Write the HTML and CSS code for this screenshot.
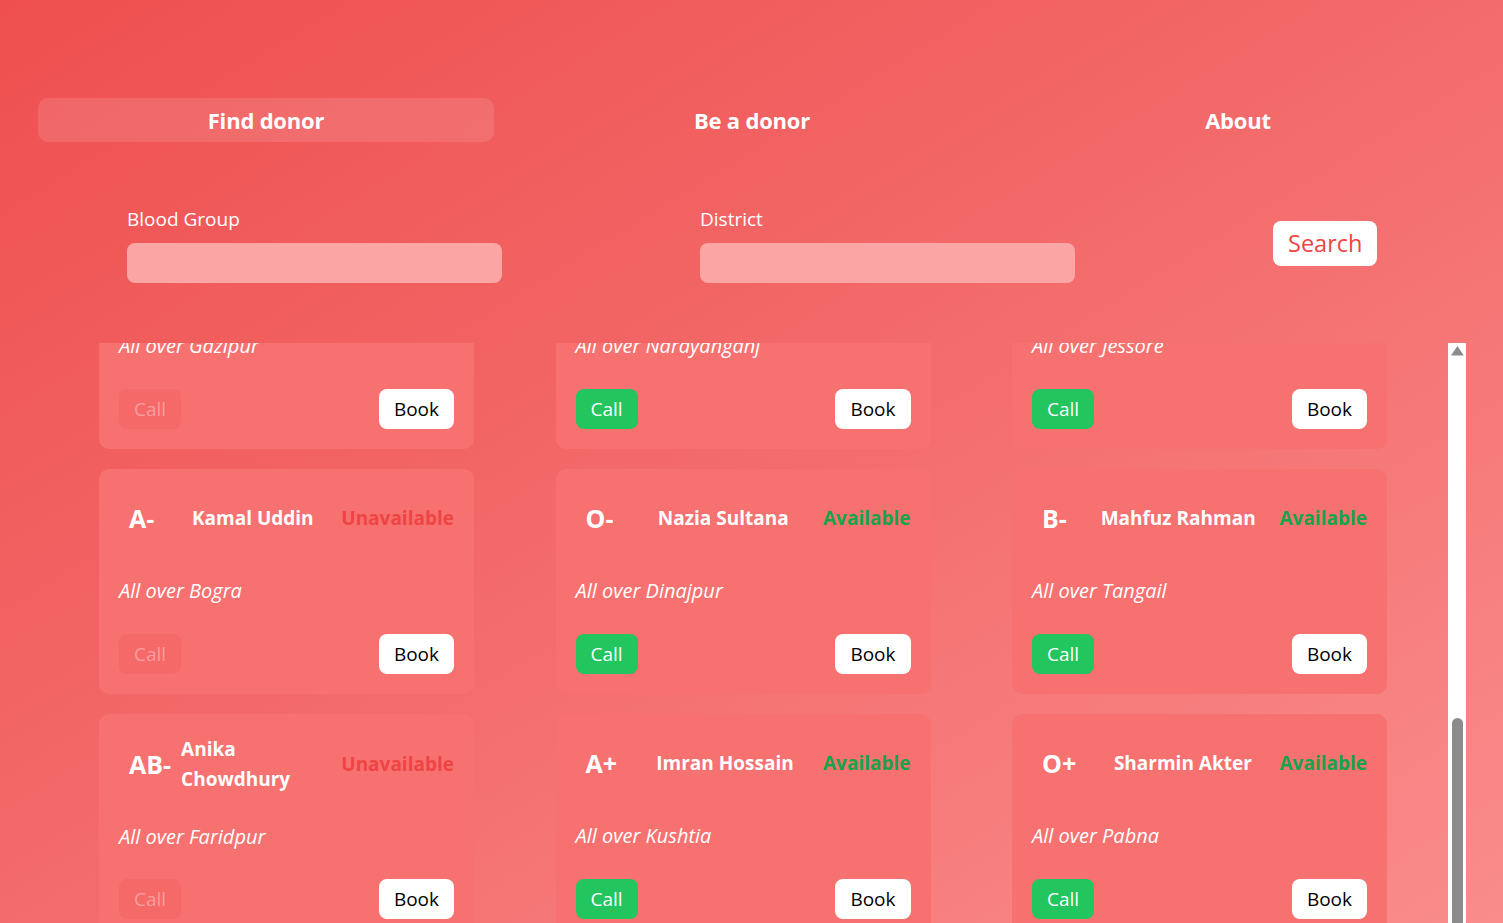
FILE: index.html
```html
<!DOCTYPE html>
<html lang="en">
<head>
<meta charset="utf-8">
<title>Find donor</title>
<link rel="stylesheet" href="styles.css">
</head>
<body>
<div class="app">
  <nav class="tabs">
    <a class="tab active">Find donor</a>
    <a class="tab">Be a donor</a>
    <a class="tab">About</a>
  </nav>

  <form class="search">
    <label class="field">
      <span class="field-label">Blood Group</span>
      <input class="field-input" type="text">
    </label>
    <label class="field">
      <span class="field-label">District</span>
      <input class="field-input" type="text">
    </label>
    <button type="button" class="search-btn">Search</button>
  </form>

  <div class="list-wrap">
    <div class="list">
      <div class="grid">
        <div class="card"><div class="card-head"><span class="group">O+</span><span class="name">Rafiq Islam</span><span class="status no">Unavailable</span></div><p class="loc">All over Gazipur</p><div class="actions"><button class="call off">Call</button><button class="book">Book</button></div></div>
        <div class="card"><div class="card-head"><span class="group">A+</span><span class="name">Sumaiya Rahman</span><span class="status ok">Available</span></div><p class="loc">All over Narayanganj</p><div class="actions"><button class="call">Call</button><button class="book">Book</button></div></div>
        <div class="card"><div class="card-head"><span class="group">B+</span><span class="name">Habib Ullah</span><span class="status ok">Available</span></div><p class="loc">All over Jessore</p><div class="actions"><button class="call">Call</button><button class="book">Book</button></div></div>

        <div class="card"><div class="card-head"><span class="group">A-</span><span class="name">Kamal Uddin</span><span class="status no">Unavailable</span></div><p class="loc">All over Bogra</p><div class="actions"><button class="call off">Call</button><button class="book">Book</button></div></div>
        <div class="card"><div class="card-head"><span class="group">O-</span><span class="name">Nazia Sultana</span><span class="status ok">Available</span></div><p class="loc">All over Dinajpur</p><div class="actions"><button class="call">Call</button><button class="book">Book</button></div></div>
        <div class="card"><div class="card-head"><span class="group">B-</span><span class="name">Mahfuz Rahman</span><span class="status ok">Available</span></div><p class="loc">All over Tangail</p><div class="actions"><button class="call">Call</button><button class="book">Book</button></div></div>

        <div class="card"><div class="card-head"><span class="group">AB-</span><span class="name">Anika Chowdhury</span><span class="status no">Unavailable</span></div><p class="loc">All over Faridpur</p><div class="actions"><button class="call off">Call</button><button class="book">Book</button></div></div>
        <div class="card"><div class="card-head"><span class="group">A+</span><span class="name">Imran Hossain</span><span class="status ok">Available</span></div><p class="loc">All over Kushtia</p><div class="actions"><button class="call">Call</button><button class="book">Book</button></div></div>
        <div class="card"><div class="card-head"><span class="group">O+</span><span class="name">Sharmin Akter</span><span class="status ok">Available</span></div><p class="loc">All over Pabna</p><div class="actions"><button class="call">Call</button><button class="book">Book</button></div></div>
      </div>
    </div>
    <div class="scrollbar" aria-hidden="true">
      <svg class="scroll-arrow" width="18" height="17" viewBox="0 0 18 17"><polygon points="3,12.5 15.8,12.5 9.4,3" fill="#8b8b8b"/></svg>
      <div class="scroll-thumb"></div>
    </div>
  </div>
</div>
<script src="script.js"></script>
</body>
</html>
```

FILE: styles.css
```css
* { box-sizing: border-box; }

html, body {
  margin: 0;
  height: 100%;
  overflow: hidden;
}

body {
  font-family: "Open Sans", "Noto Sans", sans-serif;
  color: #fff;
  background: linear-gradient(to bottom right, #ef4f4f 0%, #f36868 45%, #fa8c8c 100%);
}

.app {
  padding: 98px 37px 0 38px;
}

.tabs {
  display: grid;
  grid-template-columns: repeat(3, 1fr);
  column-gap: 30px;
}

.tab {
  height: 44px;
  display: flex;
  align-items: center;
  justify-content: center;
  font-size: 22px;
  font-weight: 700;
  color: #fff;
  border-radius: 10px;
  letter-spacing: -0.2px;
}

.tab.active {
  background: rgba(255, 255, 255, 0.12);
}

.search {
  display: grid;
  grid-template-columns: 375px 375px auto;
  column-gap: 198px;
  align-items: center;
  justify-content: start;
  padding: 63px 0 60px 89px;
  margin: 0;
}

.field {
  display: flex;
  flex-direction: column;
}

.field-label {
  font-size: 19px;
  line-height: 28px;
  margin-bottom: 10px;
}

.field-input {
  height: 40px;
  border: 0;
  border-radius: 8px;
  background: #fca5a5;
  outline: none;
  font: inherit;
}

.search-btn {
  height: 45px;
  padding: 0 15px;
  border: 0;
  border-radius: 8px;
  background: #fff;
  color: #ef4444;
  font-family: inherit;
  font-size: 23.5px;
  margin-top: -2px;
}

.list-wrap {
  position: relative;
}

.list {
  height: 616px;
  overflow-y: scroll;
  scrollbar-width: none;
  padding-right: 18px;
}

.scrollbar {
  position: absolute;
  top: 0;
  right: 0;
  bottom: 0;
  width: 18px;
  background: #fff;
}

.scroll-arrow {
  display: block;
}

.scroll-thumb {
  position: absolute;
  top: 375px;
  left: 4px;
  width: 11px;
  height: 240px;
  border-radius: 6px;
  background: #8b8b8b;
}

.grid {
  display: grid;
  grid-template-columns: repeat(3, 375px);
  column-gap: 81.5px;
  row-gap: 20px;
  justify-content: center;
  padding: 20px 0;
}

.card {
  height: 225px;
  padding: 20px;
  border-radius: 10px;
  background: #f87171;
  display: flex;
  flex-direction: column;
  justify-content: space-between;
}

.card-head {
  display: flex;
  align-items: center;
  justify-content: space-between;
}

.group {
  padding: 13px 10px;
  font-size: 25px;
  line-height: 32px;
  font-weight: 700;
  white-space: nowrap;
}

.name {
  font-size: 19px;
  line-height: 30px;
  font-weight: 700;
}

.status {
  font-size: 19px;
  line-height: 30px;
  font-weight: 700;
  white-space: nowrap;
}

.status.ok { color: #16a34a; }
.status.no { color: #ef4444; }

.loc {
  margin: 0;
  font-size: 20px;
  line-height: 28px;
  font-style: italic;
}

.actions {
  display: flex;
  justify-content: space-between;
}

.call, .book {
  height: 40px;
  padding: 0 15px;
  border: 0;
  border-radius: 8px;
  font-family: inherit;
  font-size: 19px;
}

.call {
  background: #22c55e;
  color: #fff;
}

.call.off {
  background: #f56969;
  color: #fa9d9d;
}

.book {
  background: #fff;
  color: #000;
}
```

FILE: script.js
```js
const list = document.querySelector('.list');
list.scrollTop = list.scrollHeight;
```
